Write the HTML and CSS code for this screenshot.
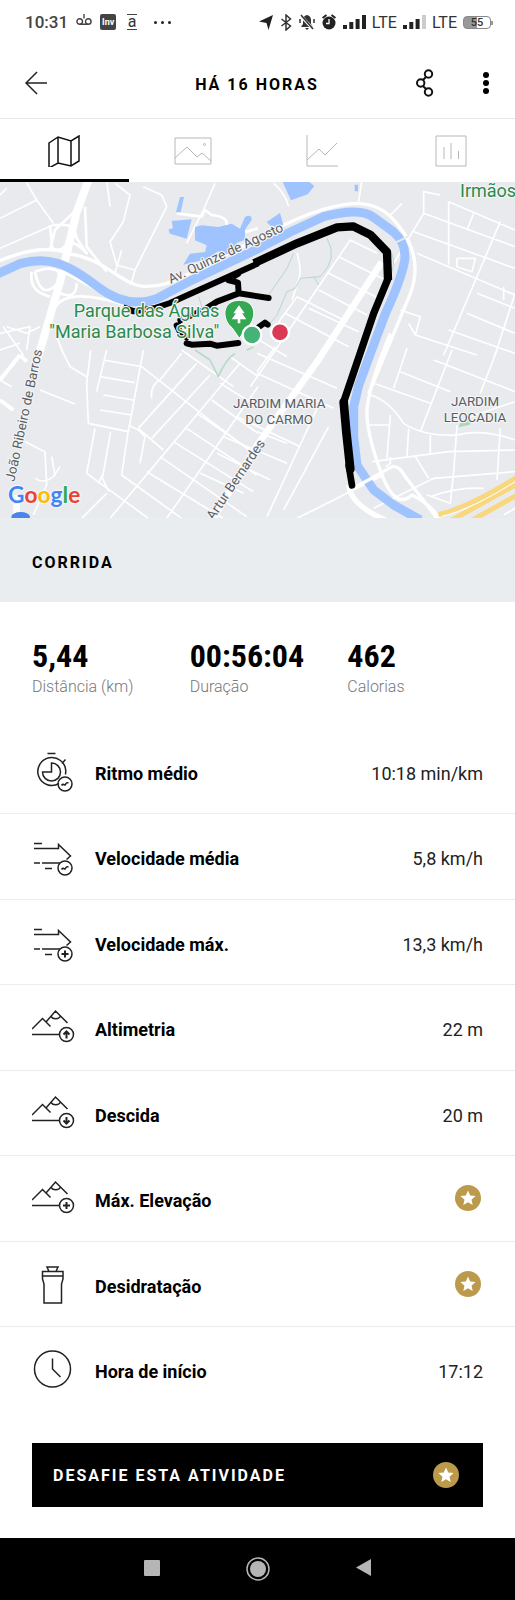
FILE: index.html
```html
<!DOCTYPE html>
<html lang="pt-BR">
<head>
<meta charset="utf-8">
<meta name="viewport" content="width=device-width, initial-scale=1">
<title>Corrida</title>
<link rel="stylesheet" href="styles.css">
</head>
<body>
<svg class="defs" aria-hidden="true">
  <symbol id="star" viewBox="0 0 26 26"><circle cx="13" cy="13" r="13" fill="#bb9b4b"/><path fill="#fff" d="M13 5.600l2.200 5 5.400.500-4.100 3.600 1.200 5.400-4.700-2.800-4.700 2.800 1.200-5.400-4.100-3.600 5.400-.500z"/></symbol>
  <symbol id="pace" viewBox="0 0 44 44"><g class="line"><path d="M15.500 4.500h8M33.500 25.500l.300-3.500A14 14 0 1 0 27 34.500M30 14.500l3.500-4"/><path d="M19.500 14v9h-9A9 9 0 1 0 19.500 14z"/><circle cx="33" cy="35" r="7"/><path d="M29.500 36.500c2-3 3.500.800 4-1s1.500-2 3-1.500"/></g></symbol>
  <symbol id="speed" viewBox="0 0 44 44"><g class="line"><path d="M2 9.500h8M2 14.500h24.500v-4l12 11.500-4 3.500M2 29h6M10 29h18M13 34.500h7"/><circle cx="33" cy="34" r="7"/></g></symbol>
  <symbol id="hill" viewBox="0 0 44 44"><g class="line"><path d="M0 24l10.500-10.500 8 8M14 17L23.500 6l12 12M19 11.500c2 3 8 3 9.500-.500M0 29.500h28"/><circle cx="34.500" cy="29.500" r="7"/></g></symbol>
</svg>

<div class="status">
  <span class="clock">10:31</span>
  <svg width="16" height="16" viewBox="0 0 16 16" fill="none" stroke="#444" stroke-width="1.400"><circle cx="3.700" cy="7.500" r="2.800"/><circle cx="12.300" cy="7.500" r="2.800"/><path d="M3.700 10.300h8.600M8 0v4.500"/></svg>
  <span class="inv">Inv</span>
  <span class="under">a</span>
  <span class="dots"><i></i><i></i><i></i></span>
  <span class="radio">
    <svg width="14" height="15" viewBox="0 0 14 15"><path fill="#222" d="M14 0L9.500 15 7.500 8 0 6.500z"/></svg>
    <svg width="12" height="17" viewBox="0 0 12 17" fill="none" stroke="#333" stroke-width="1.500"><path d="M1.500 5l9 7-4.500 4V1l4.500 4-9 7"/></svg>
    <svg width="16" height="16" viewBox="0 0 16 16"><path fill="#333" d="M8 1c3 .700 4 3 4 5v4l2 3H2l2-3V6c0-2 1-4.300 4-5z"/><path stroke="#fff" stroke-width="3" d="M2 2l12 13"/><path stroke="#333" stroke-width="1.500" d="M2 1l12 14M1 5v4M15 5v4"/><path fill="#333" d="M6 14h4l-2 2z"/></svg>
    <svg width="14" height="16" viewBox="0 0 14 16"><circle cx="7" cy="9" r="6.500" fill="#222"/><path d="M.500 4l4-3M13.500 4l-4-3" stroke="#222" stroke-width="2"/><path d="M7 5v4.500H4" fill="none" stroke="#fff" stroke-width="1.300"/></svg>
    <svg class="bars" width="23" height="14" viewBox="0 0 23 14" fill="#222"><path d="M0 10h4v4H0zM6.300 7h4v7h-4zM12.600 4h4v10h-4zM19 0h4v14h-4z"/></svg>
    <span>LTE</span>
    <svg class="bars" width="23" height="14" viewBox="0 0 23 14" fill="#222"><path d="M0 10h4v4H0zM6.300 7h4v7h-4zM12.600 4h4v10h-4z"/><path fill="#ccc" d="M19 0h4v14h-4z"/></svg>
    <span>LTE</span>
    <span class="battery">55</span>
  </span>
</div>

<header class="bar">
  <button class="icon-btn" type="button" aria-label="Voltar"><svg width="23" height="24" viewBox="0 0 23 24" fill="none" stroke="#222" stroke-width="1.500"><path d="M22 12H1M12 1L1 12l11 11"/></svg></button>
  <h1>HÁ 16 HORAS</h1>
  <div class="actions">
    <button class="icon-btn" type="button" aria-label="Compartilhar"><svg width="18" height="28" viewBox="0 0 18 28" fill="none" stroke="#111" stroke-width="2"><circle cx="12.500" cy="5" r="3.700"/><circle cx="4.700" cy="14" r="3.700"/><circle cx="12.500" cy="23" r="3.700"/><path d="M10 8l-3 3M7 17l3 3"/></svg></button>
    <button class="icon-btn" type="button" aria-label="Mais opções"><svg width="6" height="22" viewBox="0 0 6 22"><circle cx="3" cy="3" r="3"/><circle cx="3" cy="11" r="3"/><circle cx="3" cy="19" r="3"/></svg></button>
  </div>
</header>

<nav class="tabs">
  <button class="tab active" type="button" aria-label="Mapa"><svg width="32" height="32" viewBox="0 0 32 32"><path d="M1 8l9-6 13 4 8-5v25l-8 5-13-3-9 5zM10 2v26M23 6v25"/></svg></button>
  <button class="tab" type="button" aria-label="Fotos"><svg width="38" height="32" viewBox="0 0 38 32"><path d="M1 3h36v26H1zM1 23l12-11 10 10 5-4 9 8"/><circle cx="30.500" cy="9.500" r="1"/></svg></button>
  <button class="tab" type="button" aria-label="Gráfico"><svg width="32" height="32" viewBox="0 0 32 32"><path d="M1 0v31h31M1 25l12-11 6 6L31 8"/></svg></button>
  <button class="tab" type="button" aria-label="Estatísticas"><svg width="32" height="32" viewBox="0 0 32 32"><path d="M1 1h30v30H1zM9 12v12M16 8v16M23.500 16v8"/></svg></button>
</nav>

<main>
<svg class="map" viewBox="0 0 1545 1008" role="img" aria-label="Mapa do percurso">
  <rect width="1545" height="1008" fill="#e8eaed"/>
  <g fill="none" stroke="#fff" stroke-width="5" stroke-linejoin="round">
    <g transform="translate(0,-6)">
      <path d="M75 0l35 60L0 115M110 60l50 70M0 205l160-70M0 45l20-20M320 0l10 80M345 10l45 35-20 80-40 60 20 70 55 15 95-190-15-35-55-25M405 270l-12 45M365 210l-20 70M645 10l-35 80M0 460l90-20-10 70M20 440l60 20 40-20M0 510l60-20M10 440l60 85M560 190l50-100M170 470l20 50"/>
      <path stroke-width="8" d="M530 100l75 10 10-20 20 15q45 5 45 25t60 25l34-10"/>
      <path stroke-width="8" d="M160 135h40q25 5 30 40l30 45q-50-55-70-15-40 15-35-20l-5-50M150 210l15-60 80-75M255 80l5 120 60 75M95 275q-10 60 55 75M105 275q70-25 80 20-60 80-80-20M180 340q50 20 50-30M180 270l130 70q40 35 65 35-190-60-215 20"/>
      <path stroke-width="10" d="M0 242q130-55 210-20c110 15 160 100 230 97q60 0 120-34l211-108q180-100 290-106 80-5 130 60c50 60 70 130 40 210l-125 300"/>
    </g>
    <g transform="translate(771,-6)">
      <path d="M50 10q35 30 45 70M315 0l-10 65M400 105l35-35M550 45l-50-10v65l-90 150M575 65l199 85M575 65v190M500 100l274 100M470 155l304 110M480 220l294 125M730 125L560 525M650 100l-20 50M774 340l-60 185M660 340l114 45M630 400l144 60M575 450l199 70M600 235v25l45 15 10-40zM430 390l60 20-15 55-20-35M475 465l185 60M740 320v40M280 180l80 40M245 230l140 70M215 280l150 75M185 330l145 75M155 385l150 70M120 350l150 75M85 400l190 100M280 180L110 430-20 620M120 350L55 440M-10 470l100 60M120 220q15 50 5 80l-20 60"/>
      <path stroke="#b5dac7" stroke-width="3" d="M210 175q35 60-20 115l-60 5-15 30-25 10-30 70-25 30M110 220L90 265 35 345M170 290l15 25M404 220q14 30-5 70M-175 350l20 65"/>
    </g>
    <g transform="translate(0,504)">
      <path d="M272 0l-12 100 5 120 120 25 45-245M185 0l25 50 50 30M320 0l-30 125M310 30l115 20M300 80l105 18M310 135l90 15M300 180l95 15M120 120l105 42M425 50l190 150 159 120M545 0L700 110M480 90q-30 15-25 55M545 10L480 90M590 40L415 235M630 75L455 265M415 235l75 65M385 225l30 15 20 20-15 80M720 40L330 505M774 110L500 505M635 150l139 100M590 190l184 125M560 235l210 140M520 275l240 150M480 320l260 180M440 365l230 140M660 100l114 70M690 20l84 60M285 235l-25 135 185 135M332 245l-25 140 20 40M310 370l-15 30M385 240l-20 135 180 130M320 430l-75 75M75 275l60 30 5 100-40 90M155 320l10 55q-30 30-60 10M180 350l-20 30M0 90l35 20"/>
      <path stroke="#b5dac7" stroke-width="5" d="M585 0l45 30 25 50q20-50 50-70M740 0l20-8"/>
      <path stroke-width="12" d="M0 90L60 15M60 15l20 20M0 150l40 30"/>
    </g>
    <g transform="translate(771,504)">
      <path d="M0 65L55-10M0 10L240 115M0 70l230 105M0 245l90 35M-60 200l190 90M-100 260l190 80M-120 310l160 80M-170 370l130 60M185 165L30 500M215 230L80 480M120 120L-100 440M450-5l-40 120M350 100l170 60M430 65l150 60M585 0L490 245M720 0l-50 130M530 30l245 95M400 195l-10 130M330 225h65M340 135q55 15 100 85 60 40 160 35 80-20 174 15M455 235l-5 85M520 255v60M345 335l230-30 199-5M475 320l40 65M120 505l260-130M350 475l180-90 244-20M600 225l-10 140-10 95-70-25M730 235l-10 155M640 200l134-45M400 320v20l-15 10M520 440q80-30 160-25M740 495l34-20"/>
      <path stroke-width="10" d="M400-50q-75 180-70 250t45 175 90 60q60 30 85 75M290 415l115-65q20-5 40 30 50 65 95 125"/>
      <path stroke-width="16" d="M275 405q5 60 110 105"/>
    </g>
    <path stroke-width="24" d="M267-10L230 90 180 300 110 540"/>
    <path stroke-width="20" d="M1145 240L955 534 771 790 640 1010M50 940v80"/>
  </g>
  <g fill="#9fc3ff">
    <path d="M540 45h12l-10 46h-14zM515 117l60-5-15 58-50-15-5-12 14-5zM585 135l20-5 50 5 40-10 25 15 15-35q20-10 20 8l-20 30v30l-25 10-5 25-30 10-20-10-40 25-65 15 20-33 45-5 5-20-35-15z"/>
    <path d="M848 0h80l15 12-20 25-50 18-10-22zM1064 8h10v20h-10zM800 120l40-27 10 35-30 12z"/>
  </g>
  <path fill="none" stroke="#9fc3ff" stroke-width="27" stroke-linejoin="round" d="M-10 277L60 245Q120 228 170 243T290 312Q380 382 470 350L560 302 771 202 871 150 971 104Q1080 75 1121 106L1181 150Q1220 185 1214 235 1205 290 1156 395L1111 515 1076 610 1061 674V764L1071 850 1121 924 1181 969 1261 1014"/>
  <path fill="none" stroke="#e8eaed" stroke-width="6" d="M1180 185l45-22"/>
  <path fill="none" stroke="#fff" stroke-width="10" d="M1060 918l75-40"/>
  <path fill="none" stroke="#f8d77f" stroke-width="15" d="M1315 998q90-20 240-115M1348 1018l200-110M1410 1018l140-78"/>
  <path fill="none" stroke="#fff" stroke-width="3" d="M1325 1003q90-20 230-110"/>
  <path fill="#a9d9b8" d="M1375 736l10-18 30-4-5 14z"/>
  <ellipse cx="62" cy="1005" rx="28" ry="15" fill="#4a86e8"/>
  <g fill="none" stroke="#000" stroke-width="18" stroke-linejoin="round">
    <path d="M370 376l32 12 60-9 48-16 265-119"/>
    <path stroke-width="25" d="M762 244l129-60 120-48 48-3 52 25 50 52 3 84"/>
    <path stroke-width="22" stroke-linecap="round" d="M1164 290l-43 104-44 130-46 136"/>
    <path stroke-width="26" stroke-linecap="round" d="M1031 660l8 90 12 112"/>
    <path stroke-width="20" stroke-linecap="round" d="M1046 850l10 60"/>
    <path stroke-linecap="round" d="M714 276l-30 18 30 8 2 32 90 14M716 334l-65 25-40 25-70 30M530 430l10 20 20 16M560 484l15 4 55-3 20 6 65-8M775 436l20-14 8 6"/>
    <path stroke-width="8" d="M560 400l-18 20-12 10"/>
  </g>
  <g class="road-label">
    <text transform="translate(512,305) rotate(-25)">Av. Quinze de Agosto</text>
    <text transform="translate(43,900) rotate(-78)">João Ribeiro de Barros</text>
    <text transform="translate(640,1016) rotate(-56)">Artur Bernardes</text>
    <text x="699" y="679">JARDIM MARIA</text><text x="736" y="725">DO CARMO</text>
    <text x="1353" y="673">JARDIM</text><text x="1331" y="719">LEOCADIA</text>
  </g>
  <g class="park-label">
    <text x="221" y="405">Parque das Águas</text>
    <text x="148" y="469">"Maria Barbosa Silva"</text>
    <text x="1380" y="45">Irmãos</text>
  </g>
  <path fill="#34a853" stroke="#fff" stroke-width="3" d="M718 355c-55 0-52 60-22 82l22 32 22-32c30-22 33-82-22-82z"/>
  <path fill="#fff" d="M717 370l17 24h-8l13 18h-18v12h-8v-12h-18l13-18h-8z"/>
  <circle cx="756" cy="459" r="28" fill="#45b277" stroke="#fff" stroke-width="7"/>
  <circle cx="840" cy="451" r="27" fill="#d93954" stroke="#fff" stroke-width="7"/>
  <text class="google" x="24" y="963"><tspan fill="#4285f4">G</tspan><tspan fill="#ea4335">o</tspan><tspan fill="#fbbc05">o</tspan><tspan fill="#4285f4">g</tspan><tspan fill="#34a853">l</tspan><tspan fill="#ea4335">e</tspan></text>
</svg>

<h2 class="sport">CORRIDA</h2>

<dl class="totals">
  <div><dd>5,44</dd><dt>Distância (km)</dt></div>
  <div><dd>00:56:04</dd><dt>Duração</dt></div>
  <div><dd>462</dd><dt>Calorias</dt></div>
</dl>

<ul class="rows">
  <li><svg class="ico"><use href="#pace"/></svg><b>Ritmo médio</b><span>10:18 min/km</span></li>
  <li><svg class="ico" viewBox="0 0 44 44"><use href="#speed"/><path class="line" d="M29.500 35.500c2-3 3.500.800 4-1s1.500-2 3-1.500"/></svg><b>Velocidade média</b><span>5,8 km/h</span></li>
  <li><svg class="ico" viewBox="0 0 44 44"><use href="#speed"/><path class="line bold" d="M33 30.500v7M29.500 34h7"/></svg><b>Velocidade máx.</b><span>13,3 km/h</span></li>
  <li><svg class="ico" viewBox="0 0 44 44"><use href="#hill"/><path class="line bold" d="M34.500 33.500v-7M31.500 29.500l3-3 3 3"/></svg><b>Altimetria</b><span>22 m</span></li>
  <li><svg class="ico" viewBox="0 0 44 44"><use href="#hill"/><path class="line bold" d="M34.500 26v7M31.500 29.500l3 3 3-3"/></svg><b>Descida</b><span>20 m</span></li>
  <li><svg class="ico" viewBox="0 0 44 44"><use href="#hill"/><path class="line bold" d="M34.500 26v7M31 29.500h7"/></svg><b>Máx. Elevação</b><svg class="star"><use href="#star"/></svg></li>
  <li><svg class="ico" viewBox="0 0 44 44"><path class="line" d="M12 41h17.500V22l1.500-5V9.500H10.500V17l1.500 5zM10.500 14H31M15 5h11l-2 4.500h-7z"/></svg><b>Desidratação</b><svg class="star"><use href="#star"/></svg></li>
  <li><svg class="ico" viewBox="0 0 44 44"><circle class="line" cx="20.500" cy="22" r="18"/><path class="line" d="M20.500 11.500V22l8 8"/></svg><b>Hora de início</b><span>17:12</span></li>
</ul>

<button class="challenge" type="button"><span>DESAFIE ESTA ATIVIDADE</span><svg class="badge"><use href="#star"/></svg></button>
</main>

<footer class="sysnav">
  <button type="button" aria-label="Recentes"><svg width="24" height="24" viewBox="0 0 24 24"><rect x="4" y="3" width="16" height="16" rx="1" fill="#b5b5b5"/></svg></button>
  <button type="button" aria-label="Início"><svg width="24" height="24" viewBox="0 0 24 24"><circle cx="12" cy="12" r="11" fill="none" stroke="#b5b5b5" stroke-width="1.500"/><circle cx="12" cy="12" r="8" fill="#b5b5b5"/></svg></button>
  <button type="button" aria-label="Voltar ao anterior"><svg width="24" height="24" viewBox="0 0 24 24"><path d="M19 2v17L4 10.500z" fill="#b5b5b5"/></svg></button>
</footer>
</body>
</html>
```

FILE: styles.css
```css
* { box-sizing: border-box; }
body { margin: 0; background: #fff; color: #000; font-family: Roboto, "Liberation Sans", sans-serif; }
button { margin: 0; padding: 0; border: 0; background: none; font: inherit; color: inherit; }
svg { display: block; flex: none; }
.defs { position: absolute; width: 0; height: 0; }

.status { display: flex; align-items: center; height: 44px; padding: 0 24px 0 25px; font-size: 16px; color: #333; }
.clock { font-size: 17px; font-weight: 500; color: #444; margin-right: 8px; }
.inv { margin-left: 8px; width: 16px; height: 16px; border-radius: 2px; background: #444; color: #fff; font-size: 9px; font-weight: 700; line-height: 16px; text-align: center; }
.under { margin-left: 11px; width: 10px; border: solid #444; border-width: 1px 0; font-size: 16px; line-height: 14px; text-align: center; }
.dots { display: flex; gap: 4px; margin-left: 17px; }
.dots i { width: 3px; height: 3px; border-radius: 50%; background: #222; }
.radio { display: flex; align-items: center; gap: 6px; margin-left: auto; }
.radio svg { margin-right: 1px; }
.radio .bars { margin-right: 0; }
.battery { position: relative; width: 28px; height: 13px; border: 1px solid #888; border-radius: 4px; background: linear-gradient(90deg, #999 50%, #fff 50%); font-size: 11px; font-weight: 500; line-height: 11px; text-align: center; }
.battery::after { content: ""; position: absolute; right: -3px; top: 4px; width: 2px; height: 4px; background: #999; }

.bar { display: grid; grid-template-columns: 1fr auto 1fr; align-items: center; height: 75px; padding: 4px 26px 0 25px; border-bottom: 1px solid #e6e6e6; }
.bar h1 { margin: 0; padding-top: 3px; font-size: 16px; line-height: 20px; font-weight: 700; letter-spacing: 2px; }
.icon-btn { display: flex; }
.actions { display: flex; justify-content: flex-end; align-items: center; gap: 49px; }

.tabs { display: grid; grid-template-columns: repeat(4, 1fr); height: 63px; }
.tab { display: flex; align-items: center; justify-content: center; padding-top: 3px; border-bottom: 3px solid transparent; }
.tab.active { border-color: #000; }
.tab svg { fill: none; stroke: #b4b8bb; stroke-width: 1; }
.tab.active svg { stroke: #111; stroke-width: 1.5; }

.map { width: 100%; height: auto; }
.map text { paint-order: stroke; stroke: #f4f5f6; stroke-width: 7px; stroke-linejoin: round; }
.road-label { font-size: 40px; fill: #5a5e63; }
.park-label { font-size: 54px; fill: #2c8a4b; }
.google { font-family: Lato, sans-serif; font-size: 68px; font-weight: 700; }

.sport { margin: 0; padding: 35px 32px 29px; background: #e9edf0; font-size: 16px; line-height: 20px; letter-spacing: 2px; }

.totals { display: grid; grid-template-columns: repeat(3, 1fr); margin: 0; padding: 35px 10px 30px 32px; }
.totals div { display: flex; flex-direction: column; }
.totals dd { margin: 0; font-family: "Roboto Condensed", "Liberation Sans Narrow", Roboto, sans-serif; font-size: 32px; line-height: 38px; font-weight: 700; }
.totals dt { font-size: 16px; line-height: 24px; font-weight: 300; color: #777; }

.rows { margin: 0; padding: 0; list-style: none; font-size: 18px; line-height: 24px; }
.rows li { display: flex; align-items: center; padding: 20px 32px; border-bottom: 1px solid #ececec; }
.rows li:nth-child(even) { padding-bottom: 21px; }
.rows li:last-child { border-bottom-color: transparent; }
.rows b { margin-left: 19px; padding-top: 5px; }
.rows span { margin-left: auto; padding-top: 5px; color: #222; }
.ico { width: 44px; height: 44px; }
.line { fill: none; stroke: #222; stroke-width: 1.5; }
.bold { stroke-width: 2; }
.star, .badge { width: 26px; height: 26px; margin-left: auto; }
.star { margin-right: 2px; }

.challenge { display: flex; align-items: center; width: calc(100% - 64px); margin: 30px 32px 31px; padding: 19px 24px 19px 21px; background: #000; color: #fff; font-size: 16px; line-height: 20px; font-weight: 700; letter-spacing: 2px; }
.challenge span { padding-top: 2px; }

.sysnav { display: flex; justify-content: center; gap: 82px; padding: 19px 0 20px; background: #000; }
```
